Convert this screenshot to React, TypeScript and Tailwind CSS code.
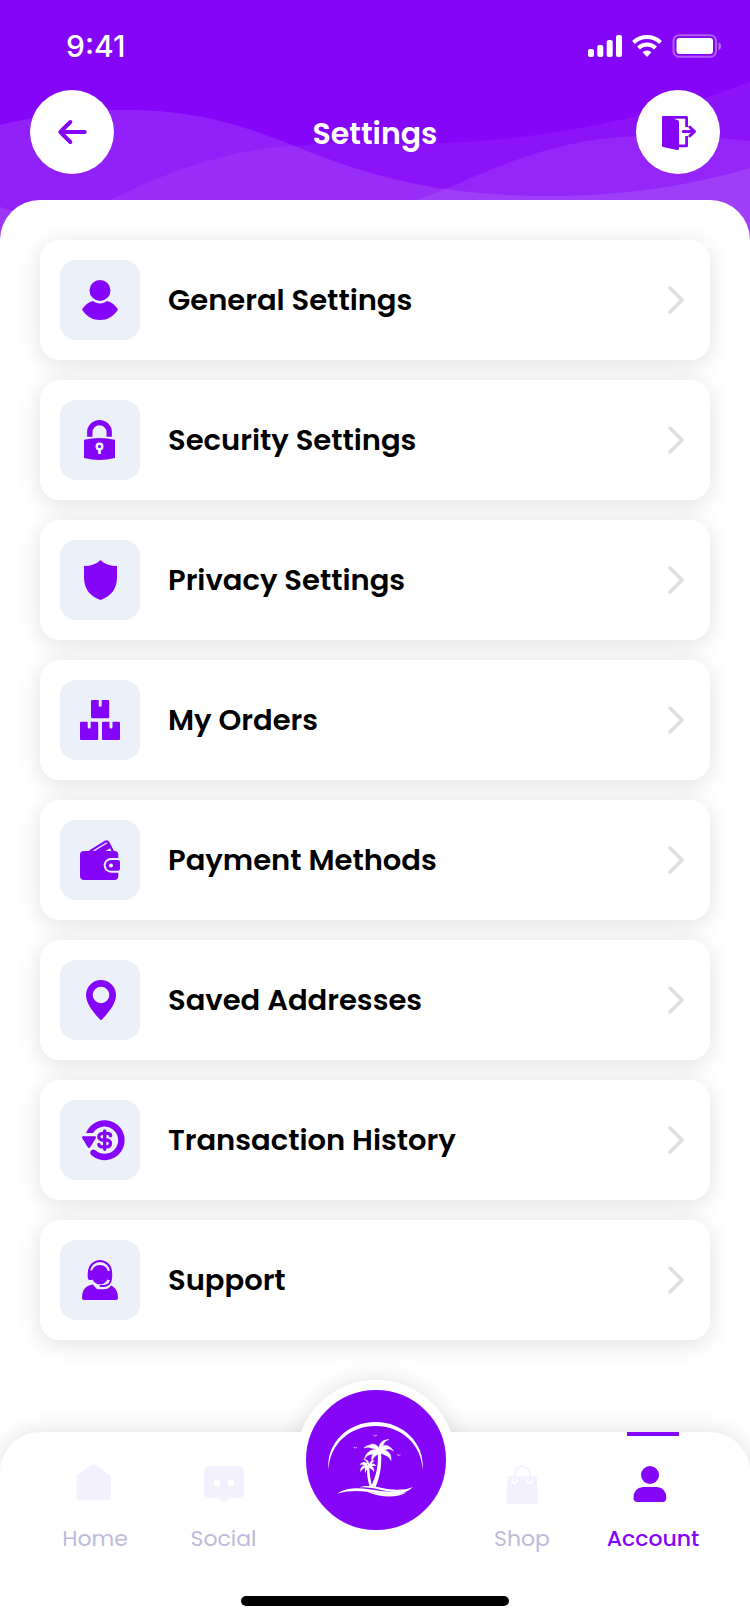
import type { ReactNode } from 'react';

type IconProps = { className?: string };

function Waves() {
  return (
    <svg
      className="absolute inset-x-0 top-0 -z-10 h-[245px] w-full bg-[#8505f8]"
      viewBox="0 0 750 245"
      preserveAspectRatio="none"
      aria-hidden="true"
    >
      <g fill="#fff">
        <path
          fillOpacity=".11"
          d="M0 125C30 118 70 110 125 110C190 110 235 122 292 145C345 167 400 184 460 191C560 202 660 195 750 168V245H0Z"
        />
        <path
          fillOpacity=".06"
          d="M110 200C175 168 230 150 292 146C340 141 390 144 440 143C530 141 650 120 750 82V245H110Z"
        />
        <path fillOpacity=".08" d="M416 200C470 182 520 150 600 139C650 133 700 135 750 141V245H416Z" />
        <path fillOpacity=".1" d="M0 207Q20 212 40 224V245H0Z" />
      </g>
    </svg>
  );
}

function StatusIcons() {
  return (
    <svg className="h-6 w-[134px]" viewBox="0 0 134 24" fill="#fff" aria-hidden="true">
      <rect x="0" y="15" width="6" height="8" rx="2" />
      <rect x="9.300" y="11" width="6" height="12" rx="2" />
      <rect x="18.700" y="6" width="6" height="17" rx="2" />
      <rect x="28" y="1" width="6" height="22" rx="2" />
      <g fill="none" stroke="#fff" strokeWidth="4">
        <path d="M45.500 8.500a19.500 19.500 0 0 1 27 0" />
        <path d="M50.500 14a12.300 12.300 0 0 1 17 0" />
      </g>
      <path d="M54.500 18.300a6.500 6.500 0 0 1 9 0L59 23Z" />
      <rect x="85.500" y="1.200" width="42.500" height="21.500" rx="5.500" fill="none" stroke="#fff" strokeOpacity=".35" strokeWidth="2" />
      <rect x="88.500" y="4" width="36.500" height="16" rx="3" />
      <path fillOpacity=".4" d="M130.500 8.200c3.500 1.300 3.500 6.700 0 8Z" />
    </svg>
  );
}

function BackIcon() {
  return (
    <svg className="size-[84px]" viewBox="0 0 84 84" fill="none" stroke="#8505f8" strokeWidth="4" strokeLinecap="round" strokeLinejoin="round" aria-hidden="true">
      <path d="M54.700 42H30.500M40.300 32L30.300 42L40.300 52" />
    </svg>
  );
}

function ExitIcon() {
  return (
    <svg className="size-[84px]" viewBox="0 0 84 84" fill="#8505f8" aria-hidden="true">
      <path d="M27 26H50.500Q52 26 52 27.500V37H49.200V28.700H37.500L41.500 30Q43 30.500 43 32V54.500H49.200V46H52V56Q52 57.300 50.500 57.300H43V58.500Q43 60.300 41 60L27 57Q26 56.700 26 55.500V27Q26 26 27 26Z" />
      <path d="M47.300 41.500H58M53.800 37L58.500 41.500L53.800 46" fill="none" stroke="#8505f8" strokeWidth="3" strokeLinecap="round" strokeLinejoin="round" />
    </svg>
  );
}

function Tile({ children }: { children: ReactNode }) {
  return (
    <svg className="size-20 shrink-0 rounded-2xl bg-[#ecf1f9]" viewBox="0 0 80 80" fill="#8505f8" aria-hidden="true">
      {children}
    </svg>
  );
}

const PersonIcon = () => (
  <Tile>
    <circle cx="40" cy="30.400" r="10.500" />
    <path d="M22 49.500C25 44.500 29 41.800 33 41C37 44.300 43 44.300 47 41C51 41.800 55 44.500 58 49.500C53.500 57 47 60 40 60C33 60 26.500 57 22 49.500Z" />
  </Tile>
);

const LockIcon = () => (
  <Tile>
    <path d="M29.800 36.800V32.300a9.700 9.700 0 0 1 19.400 0V36.800" fill="none" stroke="#8505f8" strokeWidth="5.400" />
    <path d="M24 39.800Q39.500 36 55 39.800V58Q39.500 62 24 58Z" />
    <path d="M39.500 49V54" stroke="#ecf1f9" strokeWidth="2.700" />
    <circle cx="39.500" cy="46.500" r="2.800" stroke="#ecf1f9" strokeWidth="2.400" />
  </Tile>
);

const ShieldIcon = () => (
  <Tile>
    <path d="M40.500 20C44.500 24 50 26 57 26V37C57 48 52 56 40.500 60C29 56 24 48 24 37V26C31 26 36.500 24 40.500 20Z" />
  </Tile>
);

const BoxesIcon = () => (
  <Tile>
    <path d="M32.200 20H38.700V25.300a1.500 1.500 0 0 0 3 0V20H48a1.200 1.200 0 0 1 1.200 1.200V37a1.200 1.200 0 0 1-1.200 1.200H32.200A1.200 1.200 0 0 1 31 37V21.200A1.200 1.200 0 0 1 32.200 20Z" />
    <path d="M21.200 41.700H27.700V47a1.500 1.500 0 0 0 3 0V41.700H37a1.200 1.200 0 0 1 1.200 1.200V58.700A1.200 1.200 0 0 1 37 60H21.200A1.200 1.200 0 0 1 20 58.700V42.900A1.200 1.200 0 0 1 21.200 41.700Z" />
    <path d="M43.200 41.700H49.500V47a1.500 1.500 0 0 0 3 0V41.700H58.800a1.200 1.200 0 0 1 1.200 1.200V58.700A1.200 1.200 0 0 1 58.800 60H43.200A1.200 1.200 0 0 1 42 58.700V42.900A1.200 1.200 0 0 1 43.200 41.700Z" />
  </Tile>
);

const WalletIcon = () => (
  <Tile>
    <path d="M27.500 31.500L44.800 20.800Q47.600 19.200 49.200 21.800L54.300 31.500Z" />
    <path d="M32.500 30.800L45.800 22.700Q47 22 47.700 23.100L37.500 29.300L35.500 30.800ZM45.500 30.900L50 28.200L51.400 30.900Z" fill="#ecf1f9" />
    <path d="M24 31H54.500Q58.300 31 58.300 34.500V38H51a7.350 7.350 0 0 0 0 14.700H58.300V56.300Q58.300 60 54.500 60H24Q20 60 20 56.300V34.500Q20 31 24 31Z" />
    <path d="M51 40H58Q60 40 60 42V48.700Q60 50.700 58 50.700H51a5.350 5.350 0 0 1 0-10.700Z" />
    <circle cx="51" cy="45.400" r="2" fill="#ecf1f9" />
  </Tile>
);

const PinIcon = () => (
  <Tile>
    <path fillRule="evenodd" d="M41 20a15 15 0 0 1 15 15C56 44 48 53 42.500 59Q41 60.800 39.500 59C34 53 26 44 26 35a15 15 0 0 1 15-15ZM41 26.700a8.300 8.300 0 1 0 0 16.600a8.300 8.300 0 0 0 0-16.600Z" />
  </Tile>
);

const HistoryIcon = () => (
  <Tile>
    <path d="M26 33A20 20 0 1 1 31.500 55.200Q29.200 53 31 50.800Q33 48.500 35.400 50.300A13.600 13.600 0 1 0 33.500 32.300L33 33Z" />
    <path d="M23 36.300H35Q36.700 36.500 35.900 38L30.200 47.200Q29 48.700 27.800 47.200L22.100 38Q21.500 36.500 23 36.300Z" />
    <path d="M50.600 35.800C50.600 34 49 33.300 47 33.300H42.500C37.600 33.300 37.600 40 42.500 40H46.800C51.700 40 51.700 46.800 46.800 46.800H42.300C40 46.800 38.800 46 38.800 44.300M44.700 30.800V49.300" fill="none" stroke="#8505f8" strokeWidth="3.300" strokeLinecap="round" />
  </Tile>
);

const SupportIcon = () => (
  <Tile>
    <path d="M29 32.500V32a11 11 0 0 1 22 0V38.500C51 43.500 47.500 45.700 44 45.900H40.500" fill="none" stroke="#8505f8" strokeWidth="2" strokeLinecap="round" />
    <path d="M39.900 25C45 25 48 28.500 48 33V37.500C47.500 41 45 43.400 42 44.200H38C34.500 43 31.700 40 31.700 36V33C31.700 28.500 35 25 39.900 25Z" />
    <path d="M29.300 30.500H32.500V40H29.500Q27.700 39.500 27.700 37.500V33Q27.700 31 29.300 30.500ZM47.500 31H50.500Q52.200 31 52.200 33V37.500Q52.200 39.500 50.500 40H47.500Z" />
    <path d="M22 58C22 50 26 45 33 44.500L36 48.200Q37 49.200 38.500 49.200H44C48 49.200 49.500 47.500 51 45.500C55.500 47.500 58 51.500 58 58Q58 60 56 60H24Q22 60 22 58Z" />
  </Tile>
);

function Chevron() {
  return (
    <svg className="h-[30px] w-4 shrink-0" viewBox="0 0 16 30" fill="none" stroke="#dedede" strokeWidth="3.400" strokeLinecap="round" strokeLinejoin="round" aria-hidden="true">
      <path d="M2 3L14 15L2 27" />
    </svg>
  );
}

function PalmLogo() {
  return (
    <svg className="size-full" viewBox="0 0 140 140" fill="#fff" aria-hidden="true">
      <path d="M22.500 80C20 53 42 32 69.500 32C97 32 119 53 116.700 80C115.500 54 95 36 69.500 36C44 36 23.500 54 22.500 80Z" />
      <path d="M71.500 60L75 60C76 73 74.500 87 69.500 97H64.500C70.500 87 73 73 71.500 60Z" />
      <path d="M61 76H63.200C63.500 84 64.500 90 66 96H63.500C61.500 90 60.700 83 61 76Z" />
      <g stroke="#fff" strokeWidth=".5" strokeLinejoin="round">
        <path d="M73 59C70 54 64 53 58 58C61 56.700 63 57 65 58C69 58.500 71 60 73 61.500Z" />
        <path d="M73 60C68 58 60 61 58.500 69C60.500 66 62 65 64.500 64.500C68 63 71 62 73 62Z" />
        <path d="M73 60.500C68 61 64.500 65 66 71.500C67 68 68.500 66.500 70 65.500C72 64 73.500 62.500 74 61Z" />
        <path d="M71.500 60C67.500 56 65.500 54 65 54.500C68 53.500 71 55 73 58C73.500 53 76 50 83 49.500C79 51 78.500 52 78 53.500C76.500 56 75 58 74.500 60Z" />
        <path d="M73.500 60C75 55 82 52.500 87.500 61C84 58.500 82 58.700 80 59.500C77.500 60.500 75 61.300 73 61.500Z" />
        <path d="M74 60.500C80 58.500 86 63 85 70.500C83.500 67.500 82 66.300 80 65.500C77.500 64.500 75 63 73.500 62Z" />
      </g>
      <path d="M62 75C60 71 56 71 53.500 75C56 73.500 58 75 62 76.500ZM62 75.500C58 74 53.500 77 54.500 82C56.500 78 59 78 62.500 77ZM62 75.500C59 77 58 80 59.500 83C60 80 62 79 63 76.500ZM61.500 75.500C61 71 59 70 57 69.500C61 68.500 63 71 63 74C64 71 66 70 69 70.500C66.500 72 65.500 74 63.500 76ZM62.500 75.500C65 72.500 69 73 70.500 76.500C68 75 66 76.500 62.500 77ZM62.500 76C66 75 69 78 68 82C66.500 79 64.500 79 62.500 77.500Z" />
      <path d="M31 103.500C45 95 60 99 75 101C88 102.500 99 100 107 97C98 105 86 107 73 104C58 100.500 46 99.500 31 103.500Z" />
      <path d="M53 97.500C60 95 69 96 76 98C85 100 94 100 100 99C92 102 83 102 75 100C67 98 60 97 53 97.500Z" />
      <path d="M60 101.500C72 103 84 107.500 101 102C94 107 82 107.500 73 105.500C68 104.500 64 103 60 101.500Z" />
      <g fill="none" stroke="#fff" strokeOpacity=".75" strokeWidth=".8">
        <path d="M67.500 45.200Q69 45 69 46.300Q69.500 45 71 45.200M47.500 57.500Q49 57 49.200 58.300Q49.700 57.200 51 57.500M91 64.700Q92.500 64.500 92.700 65.700Q93.200 64.700 94.500 64.700" />
      </g>
    </svg>
  );
}

const HomeIcon = ({ className }: IconProps) => (
  <svg className={className} viewBox="0 0 40 40" fill="currentColor" aria-hidden="true">
    <path d="M16.700 1Q18.500-.2 20.300 1L34.300 10.500Q36 12 36 14V33Q36 36.300 32.700 36.300H4.500Q1.300 36.300 1.300 33V14Q1.300 12 3 10.500Z" />
  </svg>
);

const SocialIcon = ({ className }: IconProps) => (
  <svg className={className} viewBox="0 0 40 40" fill="currentColor" aria-hidden="true">
    <path fillRule="evenodd" d="M6 2H34Q40 2 40 8V28Q40 34 34 34H27.500Q25.500 34 24 35.200L21.500 37.200Q20 38.500 18.500 37.200L16 35.200Q14.500 34 12.500 34H6Q0 34 0 28V8Q0 2 6 2ZM13 15.700a3.200 3.200 0 1 0 0 6.400a3.200 3.200 0 0 0 0-6.400ZM27 15.700a3.200 3.200 0 1 0 0 6.400a3.200 3.200 0 0 0 0-6.400Z" />
  </svg>
);

const ShopIcon = ({ className }: IconProps) => (
  <svg className={className} viewBox="0 0 40 40" fill="currentColor" aria-hidden="true">
    <path d="M5.700 12.300H34.700L36.300 40H4Z" />
    <path d="M12.500 17.500V11a7.800 8.800 0 0 1 15.600 0V17.500" fill="none" stroke="currentColor" strokeWidth="1.800" />
    <path d="M11 15.200a2.400 2.400 0 1 0 3.200 0M26 15.200a2.400 2.400 0 1 0 3.200 0" fill="none" stroke="#fff" strokeWidth="1.600" strokeLinecap="round" />
  </svg>
);

const AccountIcon = ({ className }: IconProps) => (
  <svg className={className} viewBox="0 0 40 40" fill="currentColor" aria-hidden="true">
    <circle cx="17" cy="11" r="9" />
    <path d="M10 23H24Q33.300 24 33.300 34Q33.300 38 29.500 38H4.500Q.5 38 .5 34Q.5 24 10 23Z" />
  </svg>
);

const rows = [
  { label: 'General Settings', Icon: PersonIcon },
  { label: 'Security Settings', Icon: LockIcon },
  { label: 'Privacy Settings', Icon: ShieldIcon },
  { label: 'My Orders', Icon: BoxesIcon },
  { label: 'Payment Methods', Icon: WalletIcon },
  { label: 'Saved Addresses', Icon: PinIcon },
  { label: 'Transaction History', Icon: HistoryIcon },
  { label: 'Support', Icon: SupportIcon },
];

type NavItemProps = {
  label: string;
  Icon: (props: IconProps) => ReactNode;
  active?: boolean;
};

function NavItem({ label, Icon, active = false }: NavItemProps) {
  return (
    <a
      href="#"
      aria-current={active ? 'page' : undefined}
      className={
        active
          ? 'relative flex flex-col items-center gap-[21px] font-medium text-[#8505f8]'
          : 'flex flex-col items-center gap-[21px] text-[#bdbbd9]'
      }
    >
      {active && <span className="absolute -top-8 h-1 w-[52px] bg-[#8505f8]" />}
      <Icon className={active ? 'size-10' : 'size-10 text-[#f4f1fe]'} />
      <span className="text-[22px] leading-7">{label}</span>
    </a>
  );
}

export default function App() {
  return (
    <div className="relative isolate flex min-h-screen flex-col bg-white font-['Poppins','Inter',sans-serif]">
      <Waves />

      <div className="flex h-[90px] items-center justify-between pt-0.5 pr-7 pl-[66px] text-white">
        <span className="font-['Inter',sans-serif] text-[30px] font-medium">9:41</span>
        <StatusIcons />
      </div>

      <header className="flex items-center justify-between px-[30px] text-white">
        <button type="button" aria-label="Back" className="rounded-full bg-white">
          <BackIcon />
        </button>
        <h1 className="pt-0.5 text-[30px] font-semibold">Settings</h1>
        <button type="button" aria-label="Log out" className="rounded-full bg-white">
          <ExitIcon />
        </button>
      </header>

      <main className="mt-[26px] flex-1 rounded-t-[40px] bg-white px-10 pt-10 pb-[91px]">
        <ul className="flex flex-col gap-5">
          {rows.map(({ label, Icon }) => (
            <li key={label} className="rounded-[20px] shadow-[0_4px_24px_rgba(0,0,0,0.12)]">
              <button
                type="button"
                className="relative z-10 flex w-full items-center rounded-[20px] bg-white py-5 pr-[26px] pl-5 text-left"
              >
                <Icon />
                <span className="ml-7 flex-1 pt-0.5 text-[29px] font-semibold text-black">{label}</span>
                <Chevron />
              </button>
            </li>
          ))}
        </ul>
      </main>

      <footer className="relative isolate">
        <nav
          aria-label="Main"
          className="rounded-t-[40px] bg-white pt-8 pb-[18px] shadow-[0_0_24px_rgba(0,0,0,0.12)]"
        >
          <div className="grid grid-cols-[128fr_129fr_176fr_116fr_146fr] items-start pr-6 pl-[31px]">
            <NavItem label="Home" Icon={HomeIcon} />
            <NavItem label="Social" Icon={SocialIcon} />
            <div className="relative -mt-[84px] flex justify-center">
              <span className="absolute -z-10 size-40 rounded-full shadow-[0_0_24px_rgba(0,0,0,0.12)]" />
              <button
                type="button"
                aria-label="Explore"
                className="relative size-40 rounded-full border-10 border-white bg-[#8505f8]"
              >
                <PalmLogo />
              </button>
            </div>
            <NavItem label="Shop" Icon={ShopIcon} />
            <NavItem label="Account" Icon={AccountIcon} active />
          </div>
          <div className="mx-auto mt-[43px] h-[10px] w-[268px] rounded-full bg-black" />
        </nav>
      </footer>
    </div>
  );
}
